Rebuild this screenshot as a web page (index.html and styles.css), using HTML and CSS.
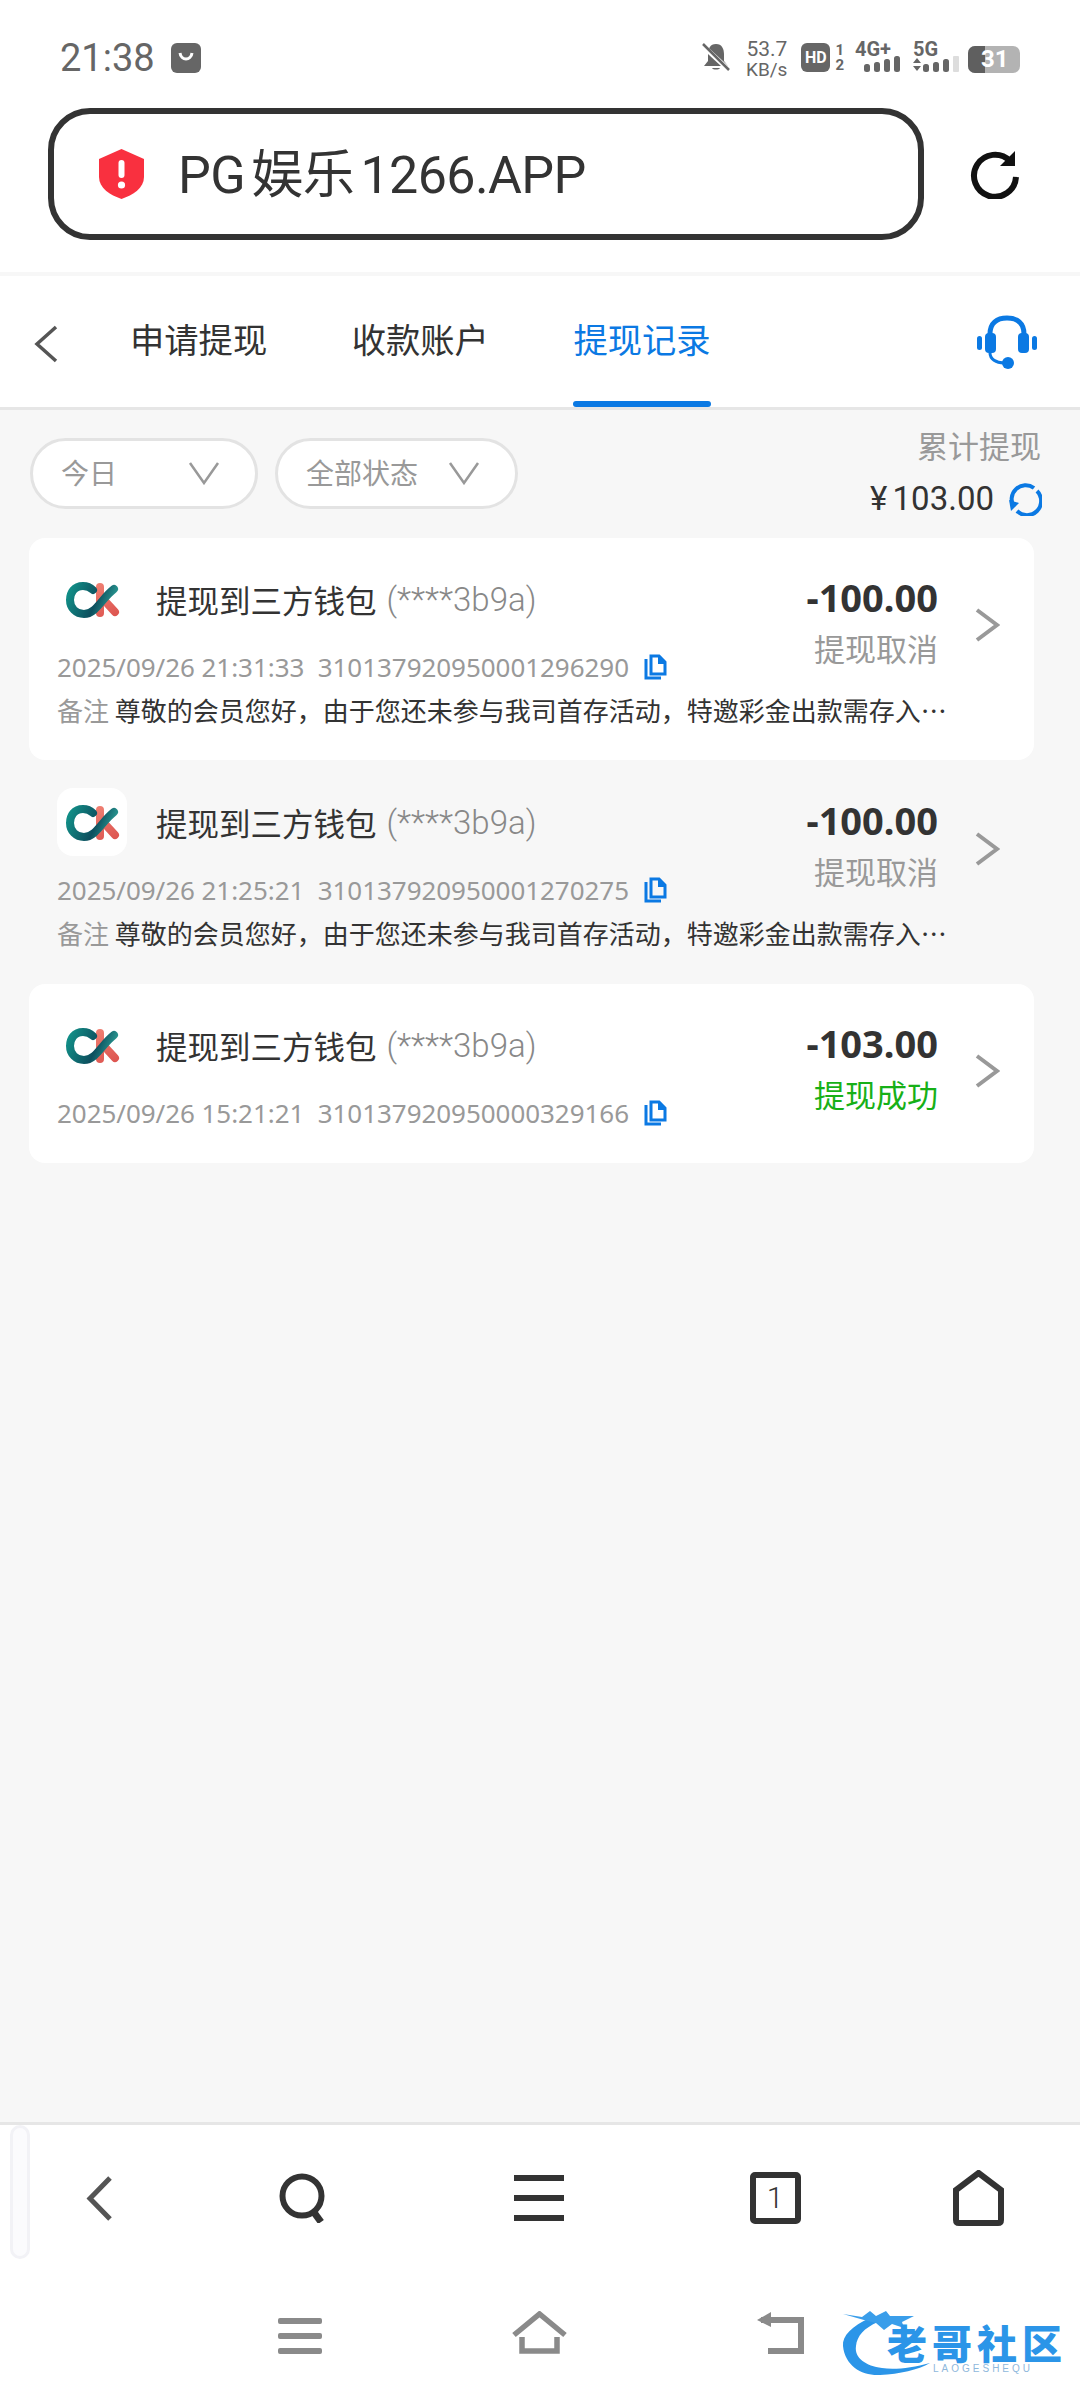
FILE: index.html
```html
<!DOCTYPE html>
<html lang="zh-CN">
<head>
<meta charset="utf-8">
<title>提现记录</title>
<link rel="stylesheet" href="styles.css">
</head>
<body>
<svg class="defs" width="0" height="0" aria-hidden="true">
  <defs>
    <linearGradient id="ckTeal" gradientUnits="userSpaceOnUse" x1="10" y1="24" x2="58" y2="44">
      <stop offset="0" stop-color="#12938a"/><stop offset=".6" stop-color="#0d4f5e"/><stop offset="1" stop-color="#2fa79c"/>
    </linearGradient>
    <linearGradient id="ckRed" gradientUnits="userSpaceOnUse" x1="42" y1="20" x2="56" y2="52">
      <stop offset="0" stop-color="#ee7d70"/><stop offset="1" stop-color="#dd5550"/>
    </linearGradient>
    <symbol id="ck" viewBox="0 0 70 68">
      <path d="M43 22V48" fill="none" stroke="url(#ckRed)" stroke-width="8" stroke-linecap="round"/>
      <path d="M47 35L58 47" fill="none" stroke="url(#ckRed)" stroke-width="8" stroke-linecap="round"/>
      <path d="M36 25C33 22 30 21 26 21C17 21 13 28 13 35C13 43 19 49 27 49C39 49 45 33 57 24" fill="none" stroke="url(#ckTeal)" stroke-width="8" stroke-linecap="round"/>
    </symbol>
    <symbol id="chev" viewBox="0 0 26 36">
      <path d="M3 3L23 18L3 33" fill="none" stroke="#999" stroke-width="4"/>
    </symbol>
    <symbol id="copy" viewBox="0 0 24 26">
      <path d="M2 5V24H17" fill="none" stroke="#0b79e3" stroke-width="3"/>
      <path d="M7 2H15L21 8V20H7Z" fill="none" stroke="#0b79e3" stroke-width="3"/>
      <path d="M14 2H16L22 8V10H14Z" fill="#0b79e3"/>
    </symbol>
    <symbol id="drop" viewBox="0 0 32 24">
      <path d="M2 2L16 22L30 2" fill="none" stroke="#999" stroke-width="2.5"/>
    </symbol>
  </defs>
</svg>

<div class="page">
  <header class="top">
    <div class="status">
      <div class="status-left">
        <span class="clock">21:38</span>
        <svg class="app-ic" viewBox="0 0 30 30"><rect width="30" height="30" rx="6" fill="#666"/><path d="M9 10C10 18 20 18 21 10" fill="none" stroke="#fff" stroke-width="3"/></svg>
      </div>
      <div class="status-right">
        <svg class="bell" viewBox="0 0 28 28"><path d="M14 1C8 1 6 6 6 11V18L2 23H26L22 18V11C22 6 20 1 14 1ZM10 25C11 27 17 27 18 25Z" fill="#666"/><path d="M1 3L27 27" stroke="#fff" stroke-width="5"/><path d="M1 1L27 27" stroke="#666" stroke-width="2.5"/></svg>
        <div class="speed"><span>53.7</span><span>KB/s</span></div>
        <div class="hd"><span class="hd-box">HD</span><span class="hd-sim"><span>1</span><span>2</span></span></div>
        <div class="sig sig-4g">
          <span class="sig-lab">4G+</span>
          <svg class="bars" viewBox="0 0 36 16"><rect x="0" y="8" width="6" height="8" rx="2.5" fill="#666"/><rect x="10" y="6" width="6" height="10" rx="2.5" fill="#666"/><rect x="20" y="3" width="6" height="13" rx="2.5" fill="#666"/><rect x="30" y="0" width="6" height="16" rx="2.5" fill="#666"/></svg>
        </div>
        <div class="sig sig-5g">
          <span class="sig-lab">5G</span>
          <svg class="bars bars5" viewBox="0 0 46 16"><path d="M0 7L4 2L8 7ZM0 10L4 15L8 10Z" fill="#666"/><rect x="10" y="8" width="6" height="8" rx="2.5" fill="#666"/><rect x="20" y="6" width="6" height="10" rx="2.5" fill="#666"/><rect x="30" y="3" width="6" height="13" rx="2.5" fill="#666"/><rect x="40" y="0" width="6" height="16" rx="1" fill="#ddd"/></svg>
        </div>
        <div class="batt"><span class="batt-fill"></span><span class="batt-num">31</span></div>
      </div>
    </div>
    <div class="addr-row">
      <div class="addr">
        <svg class="shield" viewBox="0 0 47 50"><path d="M23.5 0L46 10V28C46 39 35 46 23.5 50C12 46 1 39 1 28V10Z" fill="#f9303f"/><rect x="20.5" y="11" width="6" height="18" rx="3" fill="#fff"/><circle cx="23.5" cy="36" r="3.6" fill="#fff"/></svg>
        <span class="addr-text">PG 娱乐 1266.APP</span>
      </div>
      <svg class="reload" viewBox="0 0 50 50"><path d="M40 12A21 21 0 1 0 46 28" fill="none" stroke="#111" stroke-width="6"/><path d="M45 2V17H30Z" fill="#111"/></svg>
    </div>
  </header>

  <nav class="tabs">
    <svg class="tabs-back" viewBox="0 0 26 38"><path d="M23 2L4 19L23 36" fill="none" stroke="#555" stroke-width="3.5"/></svg>
    <a class="tab">申请提现</a>
    <a class="tab">收款账户</a>
    <a class="tab tab-on">提现记录</a>
    <svg class="headset" viewBox="0 0 62 54"><path d="M14 28V19C14 8 21 3 31 3C41 3 48 8 48 19V28" fill="none" stroke="#0b79e3" stroke-width="5"/><rect x="9" y="18" width="11" height="20" rx="4" fill="#0b79e3"/><rect x="42" y="18" width="11" height="20" rx="4" fill="#0b79e3"/><rect x="1" y="21" width="5" height="14" rx="2.5" fill="#0b79e3"/><rect x="56" y="21" width="5" height="14" rx="2.5" fill="#0b79e3"/><path d="M14 38C14 44 20 48 28 48" fill="none" stroke="#0b79e3" stroke-width="3"/><circle cx="32" cy="48" r="6" fill="#0b79e3"/></svg>
  </nav>

  <main class="content">
    <div class="filters">
      <div class="pills">
        <div class="pill pill-day"><span>今日</span><svg class="pill-drop"><use href="#drop"/></svg></div>
        <div class="pill pill-state"><span>全部状态</span><svg class="pill-drop"><use href="#drop"/></svg></div>
      </div>
      <div class="total">
        <span class="total-lab">累计提现</span>
        <div class="total-val"><span>¥ 103.00</span>
          <svg class="total-ic" viewBox="0 0 34 34"><path d="M6 25A14 14 0 0 1 26 6" fill="none" stroke="#0b79e3" stroke-width="4"/><path d="M29 9A14 14 0 0 1 9 29" fill="none" stroke="#0b79e3" stroke-width="4"/><path d="M1 18L11 21L3 29Z" fill="#0b79e3"/></svg>
        </div>
      </div>
    </div>

    <div class="records">
      <article class="rec rec-white">
        <div class="rec-body">
          <div class="rec-head">
            <div class="rec-left">
              <div class="rec-title"><svg class="logo"><use href="#ck"/></svg><span class="rec-name">提现到三方钱包</span><span class="rec-acct">(****3b9a)</span></div>
              <div class="rec-meta"><span class="rec-date">2025/09/26 21:31:33&nbsp;&nbsp;310137920950001296290</span><svg class="copy"><use href="#copy"/></svg></div>
            </div>
            <div class="rec-right"><span class="rec-amt">-100.00</span><span class="rec-st">提现取消</span></div>
          </div>
          <p class="rec-note"><span class="rec-note-lab">备注</span> 尊敬的会员您好，由于您还未参与我司首存活动，特邀彩金出款需存入…</p>
        </div>
        <svg class="rec-chev"><use href="#chev"/></svg>
      </article>

      <article class="rec rec-mid">
        <div class="rec-body">
          <div class="rec-head">
            <div class="rec-left">
              <div class="rec-title"><svg class="logo"><use href="#ck"/></svg><span class="rec-name">提现到三方钱包</span><span class="rec-acct">(****3b9a)</span></div>
              <div class="rec-meta"><span class="rec-date">2025/09/26 21:25:21&nbsp;&nbsp;310137920950001270275</span><svg class="copy"><use href="#copy"/></svg></div>
            </div>
            <div class="rec-right"><span class="rec-amt">-100.00</span><span class="rec-st">提现取消</span></div>
          </div>
          <p class="rec-note"><span class="rec-note-lab">备注</span> 尊敬的会员您好，由于您还未参与我司首存活动，特邀彩金出款需存入…</p>
        </div>
        <svg class="rec-chev"><use href="#chev"/></svg>
      </article>

      <article class="rec rec-white rec-short">
        <div class="rec-body">
          <div class="rec-head">
            <div class="rec-left">
              <div class="rec-title"><svg class="logo"><use href="#ck"/></svg><span class="rec-name">提现到三方钱包</span><span class="rec-acct">(****3b9a)</span></div>
              <div class="rec-meta"><span class="rec-date">2025/09/26 15:21:21&nbsp;&nbsp;310137920950000329166</span><svg class="copy"><use href="#copy"/></svg></div>
            </div>
            <div class="rec-right"><span class="rec-amt">-103.00</span><span class="rec-st rec-ok">提现成功</span></div>
          </div>
        </div>
        <svg class="rec-chev"><use href="#chev"/></svg>
      </article>
    </div>
  </main>

  <footer class="bottom">
    <span class="edge"></span>
    <div class="tools">
      <svg class="t-back" viewBox="0 0 26 45"><path d="M24 2L4 22.5L24 43" fill="none" stroke="#555" stroke-width="5"/></svg>
      <svg class="t-search" viewBox="0 0 48 50"><circle cx="23" cy="23" r="19.5" fill="none" stroke="#333" stroke-width="6"/><path d="M34 38L42 49" stroke="#333" stroke-width="7"/></svg>
      <svg class="t-menu" viewBox="0 0 50 46"><rect width="50" height="6" fill="#333"/><rect y="20" width="50" height="6" fill="#333"/><rect y="40" width="50" height="6" fill="#333"/></svg>
      <div class="t-tabs">1</div>
      <svg class="t-home" viewBox="0 0 51 56"><path d="M25.5 3L48 20V50Q48 53 45 53H6Q3 53 3 50V20Z" fill="none" stroke="#333" stroke-width="6"/></svg>
    </div>
    <div class="sysnav">
      <svg class="s-menu" viewBox="0 0 44 36"><rect width="44" height="6" rx="2" fill="#8a8a8a"/><rect y="15" width="44" height="6" rx="2" fill="#8a8a8a"/><rect y="30" width="44" height="6" rx="2" fill="#8a8a8a"/></svg>
      <svg class="s-home" viewBox="0 0 57 43"><path d="M3 24L28.5 3L54 24" fill="none" stroke="#8a8a8a" stroke-width="5.5"/><path d="M11 26V40H46V26" fill="none" stroke="#8a8a8a" stroke-width="5.5"/></svg>
      <svg class="s-back" viewBox="0 0 47 42"><path d="M4 8H44V39H11" fill="none" stroke="#8a8a8a" stroke-width="6"/><path d="M14 0V15L0 8Z" fill="#8a8a8a"/></svg>
    </div>
    <div class="mark">
      <svg class="mark-dragon" viewBox="0 0 100 68"><path d="M28 10C10 18 0 28 1 38C3 58 20 68 38 67C58 66 76 62 88 55C70 60 52 62 40 60C24 58 12 50 14 38C15 28 22 20 36 14Z" fill="#2b95e8"/><path d="M1 6L20 9L28 3L34 8L44 3L48 8L72 8L60 14L62 20L50 16L42 22L34 15L22 12Z" fill="#3a9eea"/></svg>
      <span class="mark-cn">老哥社区</span>
      <span class="mark-en">LAOGESHEQU</span>
    </div>
  </footer>
</div>
</body>
</html>
```

FILE: styles.css
```css
html, body { margin: 0; padding: 0; }
body { font-family: "Noto Sans", "Noto Sans CJK SC", sans-serif; color: #333; background: #f7f7f7; }
.defs { position: absolute; }
.page { width: 1080px; height: 2400px; display: flex; flex-direction: column; overflow: hidden; }

.top { height: 272px; background: #fff; flex: none; box-sizing: border-box; }
.status { height: 108px; padding: 40px 60px 0; box-sizing: border-box; display: flex; justify-content: space-between; align-items: flex-start; }
.status-left { display: flex; align-items: center; gap: 16px; height: 36px; }
.clock { font-family: Roboto, sans-serif; font-size: 38px; color: #666; line-height: 36px; }
.app-ic { width: 30px; height: 30px; }
.status-right { display: flex; align-items: flex-start; }
.bell { width: 28px; height: 28px; margin: 3px 13px 0 0; }
.speed { display: flex; flex-direction: column; align-items: flex-end; width: 44px; font-family: Roboto, sans-serif; color: #666; font-size: 21px; line-height: 18px; margin-right: 14px; }
.speed span:last-child { font-size: 19px; margin-top: 3px; }
.hd { display: flex; margin: 3px 12px 0 0; }
.hd-box { width: 29px; height: 29px; background: #666; border-radius: 6px; color: #fff; font: 700 16px/29px Roboto, sans-serif; text-align: center; }
.hd-sim { display: flex; flex-direction: column; font: 700 15px/15px Roboto, sans-serif; color: #666; margin-left: 5px; }
.sig { display: flex; flex-direction: column; align-items: flex-end; width: 44px; margin-right: 13px; }
.sig-4g { margin-top: 2px; }
.sig-4g .sig-lab { margin-right: 9px; }
.sig-5g { margin-top: 2px; width: 46px; margin-right: 9px; align-items: flex-start; }
.sig-lab { font: 700 20px/14px Roboto, sans-serif; color: #666; }
.bars { width: 36px; height: 16px; }
.bars5 { width: 46px; }
.batt { position: relative; width: 52px; height: 27px; margin-top: 6px; background: #b3b3b3; border-radius: 7px; overflow: hidden; }
.batt-fill { display: block; width: 17px; height: 27px; background: #5f5f5f; }
.batt-num { position: absolute; top: 0; left: 13px; font: 700 24px/27px Roboto, sans-serif; color: #fff; }

.addr-row { display: flex; align-items: center; padding-left: 48px; }
.addr { width: 876px; height: 132px; box-sizing: border-box; border: 6px solid #333; border-radius: 42px; display: flex; align-items: center; padding-left: 44px; }
.shield { width: 47px; height: 50px; flex: none; }
.addr-text { margin: 4px 0 0 33px; font-family: Roboto, "Noto Sans CJK SC", sans-serif; font-size: 52px; line-height: 60px; color: #333; word-spacing: -6px; letter-spacing: -.6px; white-space: nowrap; }
.reload { width: 50px; height: 50px; margin-left: 46px; }

.tabs { margin-top: 4px; height: 134px; padding-top: 4px; box-sizing: border-box; background: #fff; border-bottom: 3px solid #e6e6e6; display: flex; align-items: center; position: relative; flex: none; }
.tabs-back { width: 26px; height: 38px; margin-left: 33px; margin-right: 71px; }
.tab { position: relative; height: 127px; line-height: 119px; font-size: 34.3px; color: #333; margin-right: 84.5px; white-space: nowrap; }
.tab-on { color: #0b79e3; }
.tab-on::after { content: ""; position: absolute; left: 0; right: 0; bottom: 0; height: 6px; border-radius: 3px; background: #0b79e3; }
.headset { width: 62px; height: 54px; position: absolute; left: 976px; top: 39px; }

.content { flex: 1; min-height: 0; }
.filters { height: 128px; padding: 14px 38px 0 30px; box-sizing: border-box; display: flex; justify-content: space-between; align-items: flex-start; }
.pills { display: flex; gap: 17px; margin-top: 14px; }
.pill { height: 71px; box-sizing: border-box; background: #fff; border: 3px solid #e3e3e3; border-radius: 36px; display: flex; align-items: center; font-size: 28px; line-height: 36px; color: #999; padding-left: 28px; padding-bottom: 2px; }
.pill-day { width: 228px; }
.pill-state { width: 243px; }
.pill-day .pill-drop { margin-left: 71px; }
.pill-state .pill-drop { margin-left: 30px; }
.pill-drop { width: 32px; height: 24px; }
.total { display: flex; flex-direction: column; align-items: flex-end; }
.total-lab { font-size: 31px; line-height: 44px; color: #999; margin-right: 1px; }
.total-val { display: flex; align-items: center; gap: 14px; font-size: 33px; line-height: 44px; margin-top: 9px; color: #333; }
.total-val span { font-family: Roboto, sans-serif; word-spacing: -3px; }
.total-ic { width: 34px; height: 34px; }

.records { margin: 0 46px 0 29px; }
.rec { display: flex; height: 222px; padding: 0 34px 0 28px; box-sizing: border-box; border-radius: 16px; }
.rec-mid { height: 224px; }
.rec-white { background: #fff; }
.rec-short { height: 179px; }
.rec-body { flex: 1; min-width: 0; padding-top: 27px; }
.rec-mid .rec-body { padding-top: 28px; }
.rec-head { display: flex; justify-content: space-between; }
.rec-left { min-width: 0; }
.rec-title { display: flex; align-items: center; height: 68px; }
.logo { width: 70px; height: 68px; background: #fff; border-radius: 16px; flex: none; }
.rec-name { margin-left: 29px; font-size: 31.5px; color: #333; white-space: nowrap; }
.rec-acct { margin-left: 10px; font-family: Roboto, sans-serif; font-weight: 300; font-size: 33px; color: #888; white-space: nowrap; }
.rec-meta { display: flex; align-items: center; gap: 15px; margin-top: 16px; height: 36px; }
.rec-date { font-size: 26px; color: #999; white-space: pre; letter-spacing: -.05px; }
.copy { width: 24px; height: 26px; flex: none; }
.rec-right { display: flex; flex-direction: column; align-items: flex-end; padding-top: 10px; margin-right: 39px; }
.rec-amt { font-size: 38px; line-height: 44px; font-weight: 700; color: #333; }
.rec-st { font-size: 31px; line-height: 44px; margin-top: 8px; color: #999; }
.rec-ok { color: #17b017; }
.rec-note { margin: 7px 0 0; font-family: "Noto Sans CJK SC", sans-serif; font-size: 26px; line-height: 36px; color: #333; white-space: nowrap; }
.rec-note-lab { color: #999; }
.rec-chev { width: 26px; height: 36px; flex: none; margin: 69px 0 0 -3px; }
.rec-mid .rec-chev { margin-top: 71px; }

.bottom { height: 278px; flex: none; background: #fff; border-top: 3px solid #e6e6e6; box-sizing: border-box; position: relative; }
.edge { position: absolute; left: 10px; top: 0; width: 20px; height: 134px; box-sizing: border-box; background: #fbfbfd; border: 3px solid #f2f2f6; border-radius: 10px; }
.tools { display: grid; grid-template-columns: 198px 210px 262px 210px 196px; align-items: center; justify-items: center; height: 56px; padding-top: 45px; }
.t-back { width: 26px; height: 45px; }
.t-search { width: 48px; height: 50px; }
.t-menu { width: 50px; height: 46px; }
.t-tabs { width: 51px; height: 52px; box-sizing: border-box; border: 6px solid #333; border-radius: 5px; text-align: center; font: 300 30px/40px Roboto, sans-serif; color: #333; }
.t-home { width: 51px; height: 56px; }
.sysnav { display: flex; align-items: flex-end; gap: 189px; padding-left: 278px; margin-top: 85px; height: 43px; }
.s-menu { width: 44px; height: 36px; }
.s-home { width: 57px; height: 43px; }
.s-back { width: 47px; height: 42px; }
.mark { position: absolute; left: 842px; top: 183px; width: 222px; height: 68px; }
.mark-dragon { position: absolute; left: 0; top: 0; width: 100px; height: 68px; }
.mark-cn { position: absolute; left: 45px; top: 18px; font-size: 40px; line-height: 36px; font-weight: 900; color: #2b95e8; letter-spacing: 5px; white-space: nowrap; }
.mark-en { position: absolute; left: 91px; top: 55px; font: 400 10px/12px "Liberation Sans", sans-serif; color: #8fb8dc; letter-spacing: 3px; }
```
